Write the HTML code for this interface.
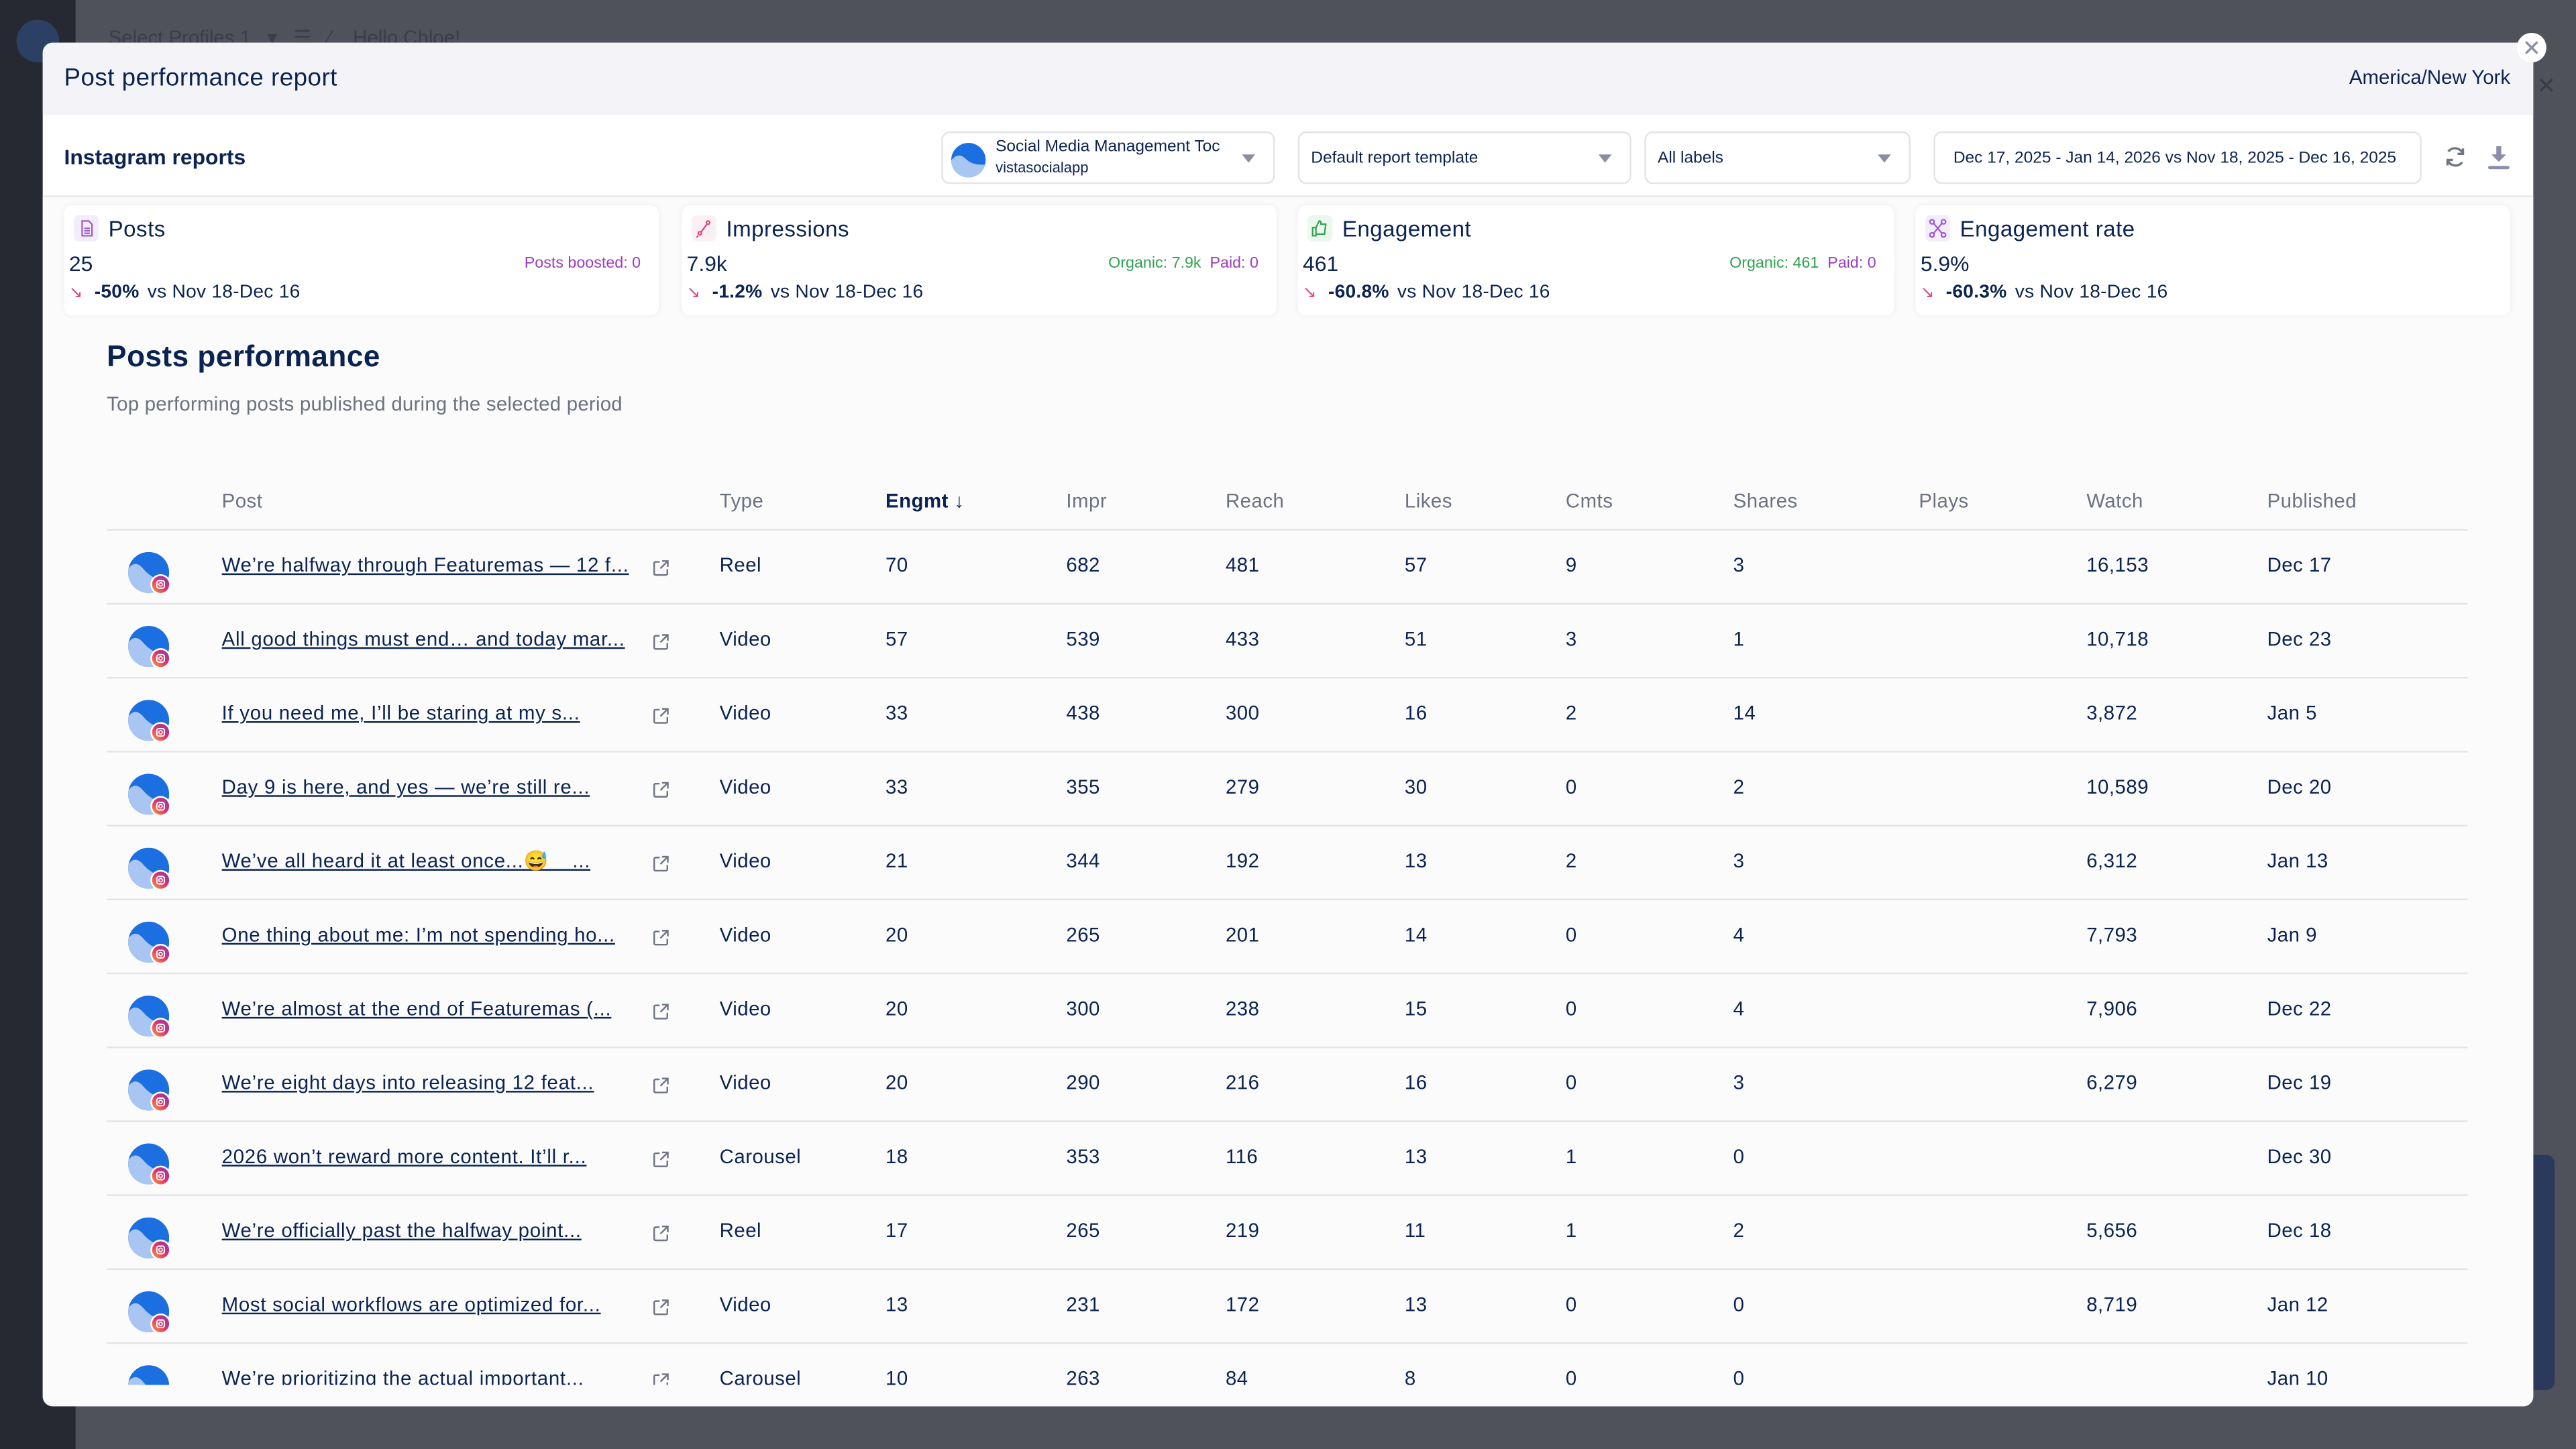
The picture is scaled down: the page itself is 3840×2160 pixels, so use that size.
<!DOCTYPE html>
<html><head><meta charset="utf-8"><style>
*{margin:0;padding:0;box-sizing:border-box}
html,body{width:3840px;height:2160px;overflow:hidden;background:#4f515b}
#s{position:absolute;left:0;top:0;width:1568px;height:882px;transform:scale(2.44898);transform-origin:0 0;font-family:"Liberation Sans",sans-serif;color:#0b2350}
.a{position:absolute;white-space:nowrap}
.side{left:0;top:0;width:46px;height:882px;background:#262832}
.modal{left:26px;top:26px;width:1516px;height:830px;background:#fff;border-radius:6px;overflow:hidden}
.hdr{left:0;top:0;width:1516px;height:44px;background:#f4f4f8}
.dd{position:absolute;top:80px;height:32px;border:1px solid #e3e4e8;border-radius:5px;background:#fff;font-size:10px;line-height:30px;padding-left:7px}
.car{position:absolute;top:13px;width:0;height:0;border-left:4px solid transparent;border-right:4px solid transparent;border-top:5px solid #8a8ea0}
.card{position:absolute;top:125px;height:67px;background:#fff;border-radius:5px;box-shadow:0 0 4px rgba(0,0,0,.06)}
.ct{position:absolute;left:27px;top:7px;font-size:13.5px;letter-spacing:.2px}
.ic{position:absolute;left:6px;top:6px;width:15px;height:16px;border-radius:3px}
.cv{position:absolute;left:3px;top:28px;font-size:13px}
.cc{position:absolute;left:3px;top:47px;font-size:11.5px;letter-spacing:.1px}
.cc b{margin:0 5px 0 7px}
.cc i{color:#e0457b;font-style:normal;font-size:10px}
.cr{position:absolute;right:11px;top:30px;font-size:9.5px}
.th{position:absolute;top:298px;font-size:12px;color:#6b7280;letter-spacing:.2px}
.row{position:absolute;left:65px;width:1437px;height:45px;border-top:1.5px solid #e4e4e6}
.row span{position:absolute;top:14px;font-size:12px;white-space:nowrap;letter-spacing:.2px}
.row .l{left:70px;text-decoration:underline;font-size:12px;letter-spacing:.3px}
.av{position:absolute;left:13px;top:13px}
.ex{position:absolute;left:332px;top:17px}
</style></head><body><div id="s">
<div class="a side"></div>
<div class="a" style="left:10px;top:12px;width:26px;height:26px;border-radius:50%;background:#2f4a78;opacity:.7"></div>
<div class="a" style="left:66px;top:16px;font-size:12px;color:#3b3e4a">Select Profiles 1 &nbsp; ▾ &nbsp; ☰ &nbsp; ⁄ &nbsp;&nbsp; Hello Chloe!</div>
<div class="a" style="left:1542px;top:703px;width:13px;height:143px;background:#2b3a5c;border-radius:0 5px 5px 0"></div>
<div class="a" style="left:1544px;top:44px;font-size:14px;color:#3a3c46">✕</div>
<div class="a modal">
 <div class="a hdr"></div>
 <div class="a" style="left:13px;top:13px;font-size:15px;letter-spacing:.2px">Post performance report</div>
 <div class="a" style="right:14px;top:14px;font-size:12px">America/New York</div>
 <div class="a" style="left:13px;top:62px;font-size:13px;font-weight:bold">Instagram reports</div>
 <div class="a" style="left:0;top:93px;width:1516px;height:1px;background:#e6e6ea"></div>
 <div class="a" style="left:0;top:94px;width:1516px;height:736px;background:#fbfbfc"></div>
</div>
<div class="a" style="left:1532px;top:20px;width:18px;height:18px;border-radius:50%;background:#fff"><svg width="18" height="18" viewBox="0 0 18 18" stroke="#8a8ea8" stroke-width="1.4"><path d="M5.5 5.5l7 7M12.5 5.5l-7 7"/></svg></div>
<div class="dd" style="left:573px;width:203px;line-height:12px;padding-left:32px;padding-top:3px"><svg style="position:absolute;left:5px;top:6px" width="21" height="21" viewBox="0 0 24 24"><clipPath id="c0"><circle cx="12" cy="12" r="12"/></clipPath><g clip-path="url(#c0)"><rect width="24" height="24" fill="#1b6fe0"/><path d="M0 12 Q5 6 10 11 T24 15 V24 H0Z" fill="#a9c6f2"/></g></svg>Social Media Management Toc<br><span style="font-size:9px">vistasocialapp</span><div class="car" style="left:182px"></div></div>
<div class="dd" style="left:790px;width:203px;padding-top:1px">Default report template<div class="car" style="left:182px"></div></div>
<div class="dd" style="left:1001px;width:162px;padding-top:1px">All labels<div class="car" style="left:141px"></div></div>
<div class="dd" style="left:1177px;width:297px;padding-left:11px;padding-top:1px">Dec 17, 2025 - Jan 14, 2026 vs Nov 18, 2025 - Dec 16, 2025</div>
<svg class="a" style="left:1487px;top:88px" width="15" height="15" viewBox="0 0 16 16" fill="none" stroke="#6f7585" stroke-width="1.5"><path d="M13 6A5.5 5.5 0 0 0 3.5 4.5M3 10a5.5 5.5 0 0 0 9.5 1.5"/><path d="M13 2.5V6H9.5M3 13.5V10h3.5"/></svg>
<svg class="a" style="left:1514px;top:88px" width="14" height="16" viewBox="0 0 14 16" fill="#8a8ea8"><path d="M5.5 1h3v5h3L7 10.5 2.5 6h3z"/><rect x="0.5" y="13" width="13" height="2" rx="1"/></svg>

<div class="card" style="left:39px;width:362px"><div class="ic" style="background:#f3ecfb"><svg width="15" height="16" viewBox="0 0 15 16" fill="none" stroke="#9b59d0" stroke-width=".9"><path d="M5 3.5h4l2 2V12.5H5z M6.3 8h3.4M6.3 9.5h3.4M6.3 11h3.4"/></svg></div><div class="ct">Posts</div><div class="cv">25</div><div class="cr" style="color:#9b3cc0">Posts boosted: 0</div><div class="cc"><i>↘</i><b>-50%</b>vs Nov 18-Dec 16</div></div>
<div class="card" style="left:415px;width:362px"><div class="ic" style="background:#fdf0f4"><svg width="15" height="16" viewBox="0 0 15 16" fill="none" stroke="#e0457b" stroke-width=".9"><circle cx="5" cy="11" r="1"/><circle cx="10" cy="4.5" r="1"/><path d="M5.5 10.5 L9.5 5.2M4 12.5l-1 1"/></svg></div><div class="ct">Impressions</div><div class="cv">7.9k</div><div class="cr"><span style="color:#2fa24f">Organic: 7.9k</span> &nbsp;<span style="color:#9b3cc0">Paid: 0</span></div><div class="cc"><i>↘</i><b>-1.2%</b>vs Nov 18-Dec 16</div></div>
<div class="card" style="left:790px;width:363px"><div class="ic" style="background:#ecf8ee"><svg width="15" height="16" viewBox="0 0 15 16" fill="none" stroke="#2fa24f" stroke-width=".9"><path d="M3 7.5h2v5H3zM5 7.5l2-4c1 0 1.2.8 1 2h3l-.8 6H5"/></svg></div><div class="ct">Engagement</div><div class="cv">461</div><div class="cr"><span style="color:#2fa24f">Organic: 461</span> &nbsp;<span style="color:#9b3cc0">Paid: 0</span></div><div class="cc"><i>↘</i><b>-60.8%</b>vs Nov 18-Dec 16</div></div>
<div class="card" style="left:1166px;width:362px"><div class="ic" style="background:#f3ecfb"><svg width="15" height="16" viewBox="0 0 15 16" fill="none" stroke="#9b59d0" stroke-width=".9"><circle cx="4" cy="4" r="1.3"/><circle cx="11" cy="4" r="1.3"/><circle cx="4" cy="12" r="1.3"/><circle cx="11" cy="12" r="1.3"/><path d="M5 5l5 6M10 5l-5 6"/></svg></div><div class="ct">Engagement rate</div><div class="cv">5.9%</div><div class="cc"><i>↘</i><b>-60.3%</b>vs Nov 18-Dec 16</div></div>

<div class="a" style="left:65px;top:207px;font-size:18px;font-weight:bold;letter-spacing:.2px">Posts performance</div>
<div class="a" style="left:65px;top:239px;font-size:12px;color:#6b7280;letter-spacing:.1px">Top performing posts published during the selected period</div>

<div class="th" style="left:135px">Post</div><div class="th" style="left:438px">Type</div>
<div class="th" style="left:539px;color:#0b2350;font-weight:bold">Engmt ↓</div>
<div class="th" style="left:649px">Impr</div><div class="th" style="left:746px">Reach</div><div class="th" style="left:855px">Likes</div><div class="th" style="left:953px">Cmts</div><div class="th" style="left:1055px">Shares</div><div class="th" style="left:1168px">Plays</div><div class="th" style="left:1270px">Watch</div><div class="th" style="left:1380px">Published</div>

<svg width="0" height="0" style="position:absolute"><defs><clipPath id="cc"><circle cx="12" cy="12" r="12"/></clipPath><linearGradient id="ig" x1="0" y1="1" x2="1" y2="0"><stop offset="0" stop-color="#f9a233"/><stop offset=".5" stop-color="#e1306c"/><stop offset="1" stop-color="#833ab4"/></linearGradient><g id="avt"><g clip-path="url(#cc)"><rect width="24" height="24" fill="#1b6fe0"/><path d="M0 10 Q4 4 9 10 T24 18 V24 H0Z" fill="#a9c6f2"/></g><circle cx="19" cy="19" r="6" fill="#fff"/><circle cx="19" cy="19" r="5" fill="url(#ig)"/><rect x="16.8" y="16.8" width="4.4" height="4.4" rx="1.2" fill="none" stroke="#fff" stroke-width=".8"/><circle cx="19" cy="19" r="1" fill="none" stroke="#fff" stroke-width=".7"/></g><g id="ext"><path d="M6 1.5h3.5V5M9.5 1.5 5 6M4.5 2H2a.8.8 0 0 0-.8.8v6.4a.8.8 0 0 0 .8.8h6.4a.8.8 0 0 0 .8-.8V6.5" fill="none" stroke="#6f7585" stroke-width="1"/></g></defs></svg>

<div class="a" style="left:0;top:322px;width:1568px;height:521px;overflow:hidden">
<div id="rows"></div>
</div>
</div>
<script>
var d=[["We’re halfway through Featuremas — 12 f...","Reel",70,682,481,57,9,3,"16,153","Dec 17"],
["All good things must end… and today mar...","Video",57,539,433,51,3,1,"10,718","Dec 23"],
["If you need me, I’ll be staring at my s...","Video",33,438,300,16,2,14,"3,872","Jan 5"],
["Day 9 is here, and yes — we’re still re...","Video",33,355,279,30,0,2,"10,589","Dec 20"],
["We’ve all heard it at least once...😅 &nbsp;&nbsp; ...","Video",21,344,192,13,2,3,"6,312","Jan 13"],
["One thing about me: I’m not spending ho...","Video",20,265,201,14,0,4,"7,793","Jan 9"],
["We’re almost at the end of Featuremas (...","Video",20,300,238,15,0,4,"7,906","Dec 22"],
["We’re eight days into releasing 12 feat...","Video",20,290,216,16,0,3,"6,279","Dec 19"],
["2026 won’t reward more content. It’ll r...","Carousel",18,353,116,13,1,0,"","Dec 30"],
["We’re officially past the halfway point...","Reel",17,265,219,11,1,2,"5,656","Dec 18"],
["Most social workflows are optimized for...","Video",13,231,172,13,0,0,"8,719","Jan 12"],
["We’re prioritizing the actual important...","Carousel",10,263,84,8,0,0,"","Jan 10"]];
var x=[373,474,584,681,790,888,990,1205,1315],h="";
d.forEach(function(r,i){h+='<div class="row" style="top:'+(i*45)+'px"><svg class="av" width="26" height="26" viewBox="0 0 25 25"><use href="#avt"/></svg><span class="l">'+r[0]+'</span><svg class="ex" width="11" height="11" viewBox="0 0 11 11"><use href="#ext"/></svg>';
for(var j=1;j<10;j++)h+='<span style="left:'+x[j-1]+'px">'+r[j]+'</span>';h+='</div>';});
document.getElementById('rows').innerHTML=h;
</script>
</body></html>
